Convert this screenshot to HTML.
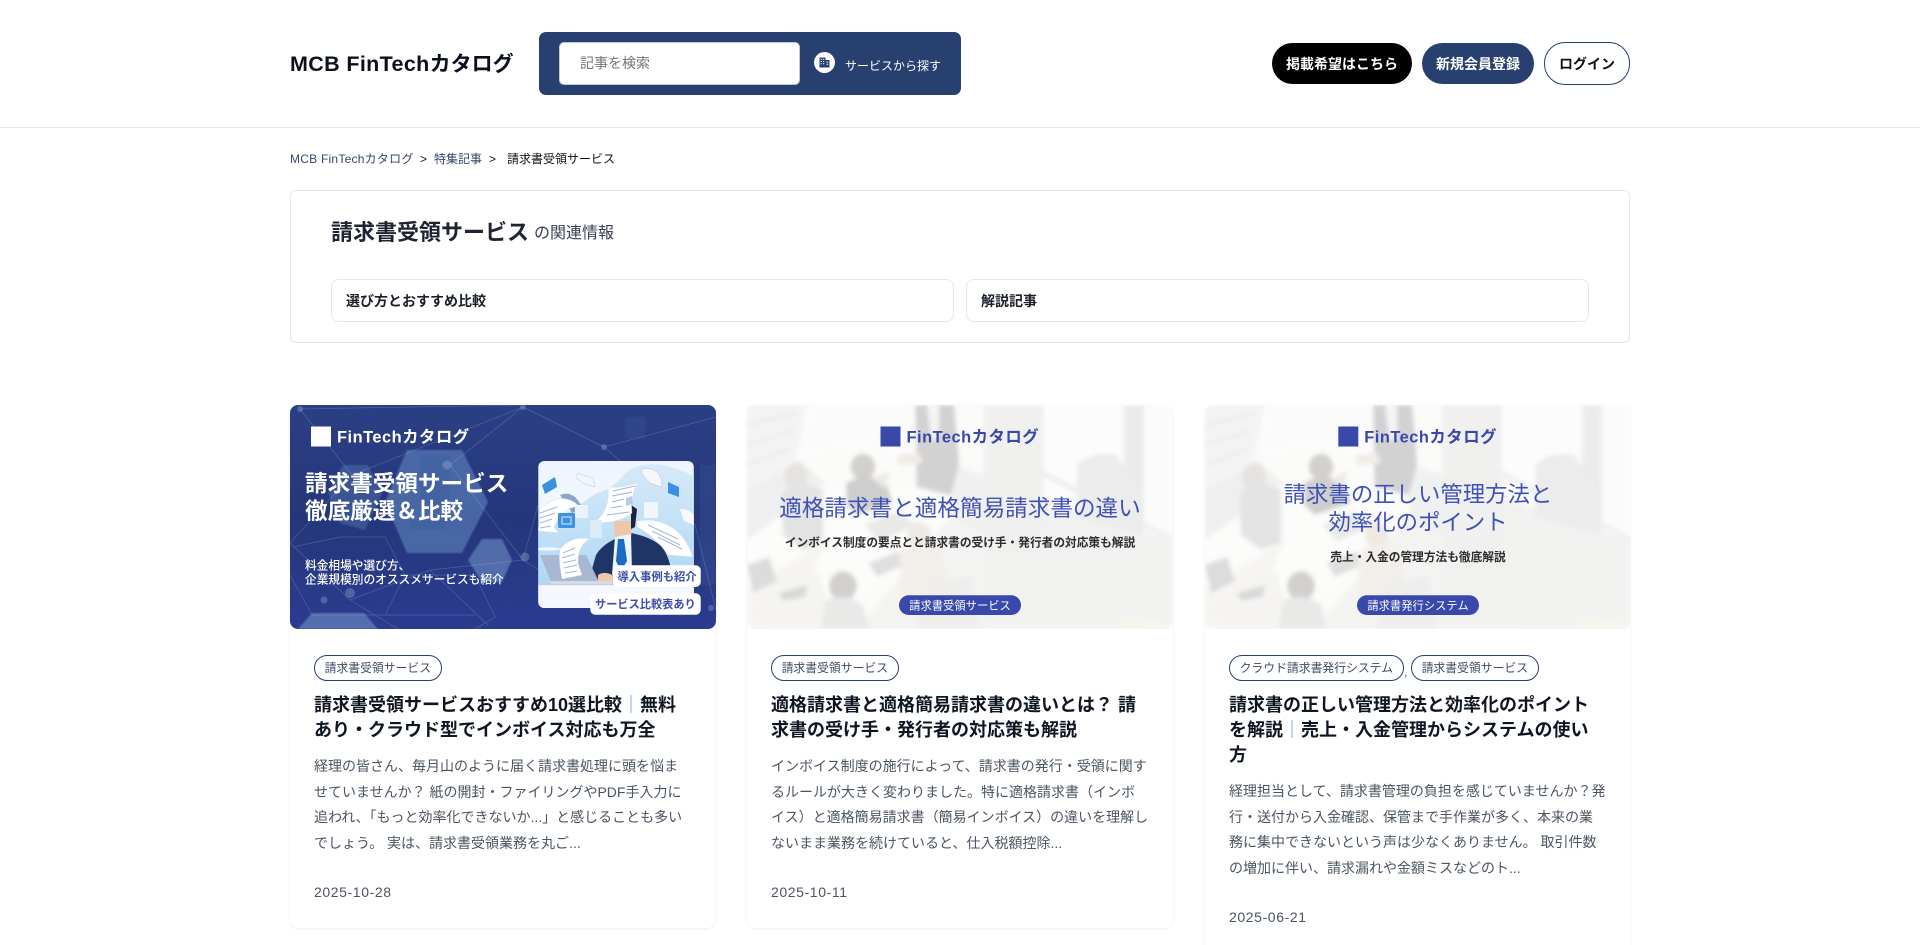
<!DOCTYPE html>
<html lang="ja">
<head>
<meta charset="utf-8">
<title>請求書受領サービス | MCB FinTechカタログ</title>
<style>
*{box-sizing:border-box;margin:0;padding:0}
html,body{width:1920px;height:945px;overflow:hidden;background:#fff}
body{position:relative;font-family:"Liberation Sans","Noto Sans CJK JP",sans-serif;color:#111827}
.a{position:absolute;white-space:nowrap}
a{color:inherit;text-decoration:none}
.hr{left:0;top:127px;width:1920px;height:1px;background:#e5e7eb}
.logo{left:290px;top:49px;line-height:30px;font-size:21px;font-weight:700;color:#0b1020}
.logo span{font-size:21.5px;letter-spacing:.35px}
.search{left:539px;top:32px;width:422px;height:63px;background:#27406f;border-radius:7px}
.input{left:559px;top:42px;width:241px;height:43px;background:#fff;border-radius:5px;border:1px solid #c6c9d2;font-size:14px;line-height:41px;padding-left:20px;color:#757575}
.find{left:845px;top:56px;line-height:20px;font-size:12px;color:#fff}
.btn{height:41px;top:43px;border-radius:21px;font-size:14px;font-weight:700;line-height:43px;text-align:center;color:#fff}
.crumb{top:150px;line-height:18px;font-size:12px;color:#34466b}
.box{left:290px;top:190px;width:1340px;height:153px;border:1px solid #e5e7eb;border-radius:6px}
.h1{left:331px;top:217px;line-height:32px;font-size:22px;font-weight:700;color:#1f2430}
.h1s{left:534px;top:221px;line-height:26px;font-size:16px;color:#374151}
.sub{top:279px;height:43px;border:1px solid #e5e7eb;border-radius:8px;font-size:14px;font-weight:700;line-height:43px;padding-left:14px;color:#1a1f2b}
.card{top:405px;width:425.33px;height:523px;background:#fff;border-radius:8px;box-shadow:0 1px 3px rgba(0,0,0,.06),0 0 1px rgba(0,0,0,.05)}
.card.long{height:600px}
.card svg{position:absolute;left:0;top:0;border-radius:8px;display:block}
.tag{top:655px;height:26px;border:1px solid #27406f;border-radius:13px;font-size:11.84px;line-height:24px;padding:0 9.6px;color:#3f4c66;background:#fff}
.t{font-size:18px;font-weight:700;line-height:25.2px;color:#0f1522}
.t span{color:#5b9bdc;font-weight:400}
.d{font-size:14px;line-height:25.6px;color:#4b5563}
.dt{font-size:14px;line-height:20px;color:#4b5563;letter-spacing:.6px}
.it{font-family:"Liberation Sans","Noto Sans CJK JP",sans-serif}
</style>
</head>
<body>

<div class="a hr"></div>
<a class="a logo" href="#"><span>MCB FinTech</span>カタログ</a>
<div class="a search"></div>
<div class="a input">記事を検索</div>
<svg class="a" style="left:814px;top:52px" width="21" height="21" viewBox="0 0 21 21">
  <circle cx="10.5" cy="10.5" r="10.5" fill="#fff"/>
  <path d="M5.5 5.5h6v10h-6zM11.5 8h4v7.5h-4z" fill="#27406f"/>
  <path d="M6.7 7.2h1.2M9 7.2h1.2M6.7 9.5h1.2M9 9.5h1.2M6.7 11.8h1.2M9 11.8h1.2M12.6 10h1.6M12.6 12.2h1.6" stroke="#fff" stroke-width="1"/>
</svg>
<a class="a find" href="#">サービスから探す</a>

<a class="a btn" href="#" style="left:1272px;width:140px;background:#000">掲載希望はこちら</a>
<a class="a btn" href="#" style="left:1422px;width:112px;background:#27406f">新規会員登録</a>
<a class="a btn" href="#" style="left:1544px;top:42px;width:86px;height:43px;line-height:43px;background:#fff;border:1px solid #27406f;color:#111">ログイン</a>

<div class="a crumb" style="left:290px;letter-spacing:.02em">MCB FinTechカタログ</div>
<div class="a crumb" style="left:420px;color:#111">&gt;</div>
<div class="a crumb" style="left:434px">特集記事</div>
<div class="a crumb" style="left:489px;color:#111">&gt;</div>
<div class="a crumb" style="left:507px;color:#111">請求書受領サービス</div>

<div class="a box"></div>
<div class="a h1">請求書受領サービス</div>
<div class="a h1s">の関連情報</div>
<a class="a sub" href="#" style="left:331px;width:623px">選び方とおすすめ比較</a>
<a class="a sub" href="#" style="left:966px;width:623px">解説記事</a>

<svg width="0" height="0" style="position:absolute">
  <defs>
    <filter id="b2" x="-20%" y="-20%" width="140%" height="140%"><feGaussianBlur stdDeviation="2"/></filter>
    <filter id="b1" x="-20%" y="-20%" width="140%" height="140%"><feGaussianBlur stdDeviation=".7"/></filter>
    <linearGradient id="bg1" x1="0" y1="0" x2="0" y2="1">
      <stop offset="0" stop-color="#2b3f84"/><stop offset=".5" stop-color="#24377b"/><stop offset="1" stop-color="#2b3b90"/>
    </linearGradient>
    <linearGradient id="pn" x1="0" y1="0" x2="0" y2="1">
      <stop offset="0" stop-color="#eef5fd"/><stop offset="1" stop-color="#f6f9fd"/>
    </linearGradient>
    <linearGradient id="wv" x1="0" y1="0" x2="0" y2="1">
      <stop offset="0" stop-color="#d6e9f9"/><stop offset="1" stop-color="#b0d8f4"/>
    </linearGradient>
    <linearGradient id="pl" x1="0" y1="0" x2="0" y2="1">
      <stop offset="0" stop-color="#e4e4e2"/><stop offset="1" stop-color="#e9e9e7"/>
    </linearGradient>
    <symbol id="photo" viewBox="0 0 426 224" width="426" height="224" overflow="hidden">
      <rect width="426" height="224" fill="#fbfbfa"/>
      <g filter="url(#b2)" opacity=".5">
        <path d="M0 0H60L48 55 0 84z" fill="#ececeb"/>
        <path d="M0 20L50 8M0 40L45 26M0 60L42 44" stroke="#dcdcdb" stroke-width="3"/>
        <path d="M60 0H180V60L110 40 52 55z" fill="#fcfcfc"/>
        <path d="M0 84L52 55 78 78 0 135z" fill="#e4e4e3"/>
        <path d="M0 135L110 70 230 110 60 224H0z" fill="#fdfdfc"/>
        <path d="M0 185L80 135 40 224H0z" fill="#f3efe7"/>
        <path d="M0 205L70 165 90 224H30z" fill="#f0eee9"/>
        <path d="M110 224L205 110 240 130V224z" fill="#ececeb"/>
        <path d="M205 60L237 70V130L205 112z" fill="#e6e6e5"/>
        <rect x="237" y="0" width="60" height="224" fill="url(#pl)"/>
        <rect x="297" y="0" width="80" height="224" fill="#fefefd"/>
        <rect x="377" y="0" width="20" height="135" fill="#dcdcdb"/>
        <rect x="397" y="0" width="29" height="135" fill="#fcfcfb"/>
        <path d="M297 92L426 136V224H297z" fill="#e9e9e8"/>
        <path d="M296 65L426 132V137L296 72z" fill="#e2e2e1"/>
        <path d="M330 60Q345 45 370 50L392 90 395 130 330 112z" fill="#dedede"/>
        <path d="M370 210L426 218V224H372z" fill="#f3ede2"/>
        <path d="M168 0H207L212 60 204 90 170 82z" fill="#a9a9aa"/>
        <path d="M180 0H192L192 30 185 38z" fill="#eeeeee"/>
        <path d="M150 50L172 48 176 58 152 60z" fill="#e8ddd3"/>
        <ellipse cx="116" cy="62" rx="12" ry="13" fill="#aaa5a1"/>
        <path d="M99 78Q120 65 140 80L146 98 110 110 99 100z" fill="#a2a2a4"/>
        <path d="M126 74L142 66 138 84z" fill="#e0d4ca"/>
        <ellipse cx="49" cy="72" rx="12" ry="14" fill="#cfccc8"/>
        <path d="M34 90Q50 72 76 85L76 138 56 145 36 130z" fill="#cdcdce"/>
        <path d="M122 158L150 147 168 155 130 172z" fill="#c4c4c4"/>
        <path d="M118 120L148 107 170 120 132 136z" fill="#d8d8d8"/>
        <path d="M0 160L22 152 30 176 6 188z" fill="#bdbdbd"/>
        <path d="M32 188L60 180 58 192 36 196z" fill="#b8b8b8"/>
        <ellipse cx="96" cy="181" rx="14" ry="15" fill="#aba7a4"/>
        <path d="M78 196Q98 186 116 200L122 224H74z" fill="#d8d8d8"/>
        <ellipse cx="172" cy="130" rx="12" ry="13" fill="#e4d9cf"/>
        <path d="M152 150Q175 130 196 152L200 190 156 196z" fill="#ebe2d9"/>
        <path d="M184 180L224 170 232 224H170z" fill="#e2e2e2"/>
      </g>
    </symbol>
  </defs>
</svg>

<!-- Card 1 -->
<article class="a card" style="left:290px">
  <svg width="426" height="224" viewBox="0 0 426 224">
    <rect width="426" height="224" fill="url(#bg1)"/>
    <g filter="url(#b1)">
      <path d="M117 45H172L198 97 172 148H117L95 97z" fill="#5f83bd" opacity=".62"/>
      <path d="M53 60H78L92 88 75 125 50 118 38 88z" fill="#6186be" opacity=".36"/>
      <path d="M192 134H212L222 155 212 177H192L178 155z" fill="#6e8fc4" opacity=".6"/>
      <path d="M22 208H74L88 224H8z" fill="#6e8fc4" opacity=".6"/>
      <path d="M130 50h30v50h-30zM120 115h36v10h-36z" fill="#3f5f9f" opacity=".45"/>
      <path d="M335 12h20v22h-20zM410 60h16v120h-16z" fill="#3a5391" opacity=".35"/>
    </g>
    <g stroke="#b9c8ea" stroke-width=".7" fill="none" opacity=".27">
      <path d="M10 4L232 0M10 4L62 70M62 70L233 2M233 2L314 42M233 2L160 60M314 42L426 12M314 42L405 120M160 60L233 155M62 70L0 138M0 138L60 195 140 165 233 155 315 206M60 195L108 224M140 165L198 220M405 120L426 205M233 155L248 100"/>
      <path d="M3 142L50 132H95L115 170 95 210H22L0 170M115 170H185L205 212 185 224M95 210H185"/>
    </g>
    <g fill="#a7b8de" opacity=".33">
      <circle cx="10" cy="4" r="3"/><circle cx="233" cy="2" r="3"/><circle cx="314" cy="42" r="3"/><circle cx="157" cy="60" r="4.5"/><circle cx="235" cy="152" r="4.5"/><circle cx="60" cy="188" r="5"/><circle cx="34" cy="195" r="3.5"/><circle cx="421" cy="203" r="3"/>
    </g>
    <rect x="21" y="21.5" width="20" height="20" fill="#fff"/>
    <text x="47" y="37.5" font-size="16.4" font-weight="700" fill="#fff" letter-spacing=".5" class="it">FinTechカタログ</text>
    <g fill="#fff" class="it" font-weight="700" font-size="22.6">
      <text x="15" y="86.5">請求書受領サービス</text>
      <text x="15" y="114">徹底厳選＆比較</text>
    </g>
    <g fill="#fff" class="it" font-size="11.7" font-weight="500">
      <text x="15" y="164.5">料金相場や選び方、</text>
      <text x="15" y="178.5">企業規模別のオススメサービスも紹介</text>
    </g>
    <!-- illustration panel -->
    <rect x="248.3" y="56" width="155.5" height="147" rx="6" fill="url(#pn)"/>
    <clipPath id="pc"><rect x="248.3" y="56" width="155.5" height="147" rx="6"/></clipPath>
    <g clip-path="url(#pc)">
      <path d="M248 122Q272 112 290 100 300 92 307 88 322 84 332 72 346 56 372 60 392 64 404 72V180H248z" fill="url(#wv)"/>
      <rect x="248" y="180" width="156" height="23" fill="#f4f8fd"/>
      <rect x="248" y="179" width="130" height="1.2" fill="#c4d0e2"/>
      <path d="M298 178L306 150Q312 140 325 134L341 128Q362 132 372 142 380 152 384 178z" fill="#1f3567"/>
      <path d="M324 116H343L341 132 333 138 325 132z" fill="#efc7a8"/>
      <path d="M325 132L341 129 342 166 322 170z" fill="#eef3f9"/>
      <path d="M328 134H334L337 156 331 166 326 156z" fill="#1a6cc2"/>
      <path d="M341 100L347 104 345 122 341 124z" fill="#1a2440"/>
      <path d="M308 170Q316 165 325 172V178H308z" fill="#efc7a8"/>
      <path d="M250 150H296L310 179H262z" fill="#a9b8d2"/>
      <path d="M260 176H322V179H262z" fill="#d4dbe7"/>
      <path d="M293 104Q284 84 270 90L282 108z" fill="#8da6ca"/>
      <path d="M250 104Q272 84 290 102 274 100 264 122 268 128 270 128L248 126z" fill="#fff" stroke="#c5d3e6" stroke-width=".4"/>
      <path d="M250 108l17-6M250 113l15-5M250 118l12-4M250 123l11-2" stroke="#a6b9d2" stroke-width="1"/>
      <path d="M318 82Q332 84 350 77L346 80Q340 95 342 108 330 118 304 118 321 105 318 82z" fill="#fff" stroke="#d5dfee" stroke-width=".4"/>
      <path d="M323 86l22-5M322 91l20-4M322 97l12-3M321 103l11-2M317 110l22-3" stroke="#9fb5d1" stroke-width="1.1"/>
      <path d="M336 93l6-2 1 8-7 2z" fill="#b9cde4"/>
      <path d="M347 116Q368 112 384 124 396 132 403 152 390 151 378 150 366 132 347 122z" fill="#fff" stroke="#c5d3e6" stroke-width=".4"/>
      <path d="M358 120l30 14M362 126l28 14M368 132l24 12" stroke="#a6b9d2" stroke-width="1"/>
      <path d="M270 144Q282 130 300 134 288 140 288 158L292 170 272 174Q268 155 270 144z" fill="#fff" stroke="#c5d3e6" stroke-width=".4"/>
      <path d="M273 148l12-5M272 153l13-4M273 158l13-3M274 163l13-3M275 168l12-2" stroke="#a6b9d2" stroke-width="1"/>
      <path d="M287 68l16 5 2 9-10-3-8-5z" fill="#f2f6fb" stroke="#a9bcd4" stroke-width=".4"/>
      <path d="M352 64q10-2 16 4 4 5 4 14l-12-4-8-9z" fill="#f4f7fb" stroke="#a9bcd4" stroke-width=".4"/>
      <rect x="354" y="97" width="14" height="16" rx="1" fill="#f1f6fc"/>
      <rect x="285" y="100" width="13" height="13" rx="2" fill="#eaf3fb"/>
      <rect x="300" y="115" width="12" height="18" rx="2" fill="#dcebf8"/>
      <path d="M390 104q8-1 14 6v10l-10-4z" fill="#f6f9fd"/>
      <path d="M252 80l13-8 2 10-12 7z" fill="#3b8fe0"/>
      <rect x="268" y="108" width="17" height="15" rx="1.5" fill="#3d93e2"/>
      <path d="M272 112h9v7h-9z" fill="none" stroke="#d8ebfb" stroke-width="1"/>
      <path d="M378 77l11 5v10l-11-4z" fill="#3b8fe0"/>
      <ellipse cx="258" cy="144" rx="13" ry="1.6" fill="#fff" opacity=".8"/>
    </g>
    <rect x="323" y="160.3" width="87.7" height="21.7" rx="5" fill="#fff"/>
    <text x="327.5" y="175.3" font-size="11.3" font-weight="700" fill="#3d4ea8" class="it">導入事例も紹介</text>
    <rect x="300.3" y="188.3" width="110.4" height="21.4" rx="5" fill="#fff"/>
    <text x="305" y="203" font-size="11.2" font-weight="700" fill="#3d4ea8" class="it">サービス比較表あり</text>
  </svg>
</article>
<a class="a tag" href="#" style="left:314px">請求書受領サービス</a>
<h2 class="a t" style="left:314px;top:693px">請求書受領サービスおすすめ10選比較<span>｜</span>無料<br>あり・クラウド型でインボイス対応も万全</h2>
<p class="a d" style="left:314px;top:754px">経理の皆さん、毎月山のように届く請求書処理に頭を悩ま<br>せていませんか？ 紙の開封・ファイリングやPDF手入力に<br>追われ、「もっと効率化できないか...」と感じることも多い<br>でしょう。 実は、請求書受領業務を丸ご...</p>
<div class="a dt" style="left:314px;top:882px">2025-10-28</div>

<!-- Card 2 -->
<article class="a card" style="left:747.33px">
  <svg width="426" height="224" viewBox="0 0 426 224">
    <use href="#photo" x="0" y="0"/>
    <rect x="133.5" y="21.5" width="20" height="20" fill="#3949ab"/>
    <text x="159.5" y="37.5" font-size="16.4" font-weight="700" fill="#3949ab" letter-spacing=".5" class="it">FinTechカタログ</text>
    <text x="213" y="111" text-anchor="middle" font-size="22.6" fill="#3f51b5" class="it">適格請求書と適格簡易請求書の違い</text>
    <text x="213" y="141.5" text-anchor="middle" font-size="11.7" font-weight="700" fill="#2c2c2c" class="it">インボイス制度の要点とと請求書の受け手・発行者の対応策も解説</text>
    <rect x="152" y="190.3" width="122" height="19.7" rx="9.8" fill="#3949ab"/>
    <text x="213" y="204.3" text-anchor="middle" font-size="11.3" fill="#fff" class="it">請求書受領サービス</text>
  </svg>
</article>
<a class="a tag" href="#" style="left:771px">請求書受領サービス</a>
<h2 class="a t" style="left:771px;top:693px">適格請求書と適格簡易請求書の違いとは？ 請<br>求書の受け手・発行者の対応策も解説</h2>
<p class="a d" style="left:771px;top:754px">インボイス制度の施行によって、請求書の発行・受領に関す<br>るルールが大きく変わりました。特に適格請求書（インボ<br>イス）と適格簡易請求書（簡易インボイス）の違いを理解し<br>ないまま業務を続けていると、仕入税額控除...</p>
<div class="a dt" style="left:771px;top:882px">2025-10-11</div>

<!-- Card 3 -->
<article class="a card long" style="left:1204.67px">
  <svg width="426" height="224" viewBox="0 0 426 224">
    <use href="#photo" x="0" y="0"/>
    <rect x="133.3" y="21.5" width="20" height="20" fill="#3949ab"/>
    <text x="159.3" y="37.5" font-size="16.4" font-weight="700" fill="#3949ab" letter-spacing=".5" class="it">FinTechカタログ</text>
    <text x="213" y="97" text-anchor="middle" font-size="22.4" fill="#3f51b5" class="it">請求書の正しい管理方法と</text>
    <text x="213" y="125" text-anchor="middle" font-size="22.4" fill="#3f51b5" class="it">効率化のポイント</text>
    <text x="213" y="156" text-anchor="middle" font-size="11.7" font-weight="700" fill="#2c2c2c" class="it">売上・入金の管理方法も徹底解説</text>
    <rect x="152" y="190.3" width="122" height="19.7" rx="9.8" fill="#3949ab"/>
    <text x="213" y="204.3" text-anchor="middle" font-size="11.3" fill="#fff" class="it">請求書発行システム</text>
  </svg>
</article>
<a class="a tag" href="#" style="left:1229px">クラウド請求書発行システム</a>
<div class="a" style="left:1404px;top:662px;font-size:12px;line-height:20px;color:#4b5563">,</div>
<a class="a tag" href="#" style="left:1411px">請求書受領サービス</a>
<h2 class="a t" style="left:1229px;top:693px">請求書の正しい管理方法と効率化のポイント<br>を解説<span>｜</span>売上・入金管理からシステムの使い<br>方</h2>
<p class="a d" style="left:1229px;top:779px">経理担当として、請求書管理の負担を感じていませんか？発<br>行・送付から入金確認、保管まで手作業が多く、本来の業<br>務に集中できないという声は少なくありません。 取引件数<br>の増加に伴い、請求漏れや金額ミスなどのト...</p>
<div class="a dt" style="left:1229px;top:907px">2025-06-21</div>

</body>
</html>
